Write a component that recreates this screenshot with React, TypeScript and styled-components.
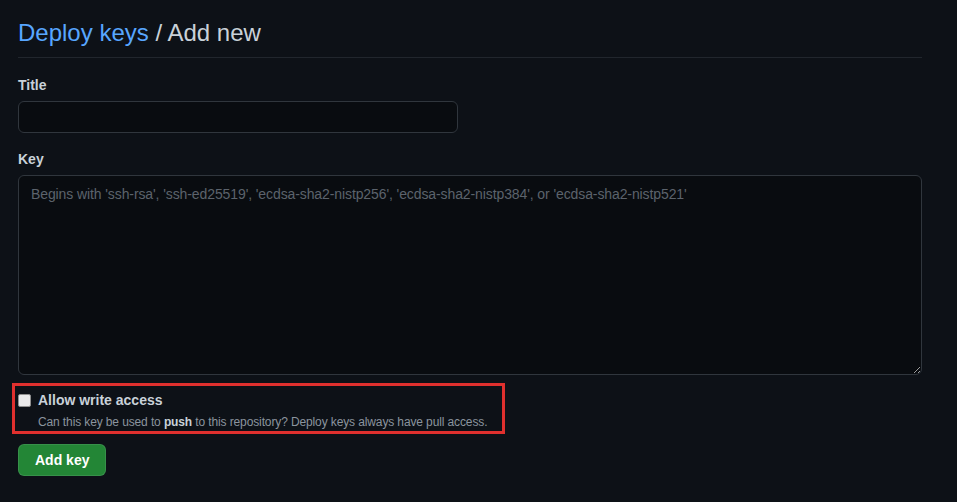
import styled, { createGlobalStyle } from 'styled-components';

const GlobalStyle = createGlobalStyle`
  html, body {
    margin: 0;
    padding: 0;
    background: #0d1117;
  }
  body {
    font-family: "Liberation Sans", Arial, sans-serif;
    color: #c9d1d9;
  }
`;

const Page = styled.div`
  padding: 15px 35px 30px 18px;
  width: 904px;
`;

const Subhead = styled.div`
  padding-bottom: 6px;
  border-bottom: 1px solid #21262d;
`;

const Heading = styled.h2`
  margin: 0;
  font-size: 24px;
  font-weight: 400;
  line-height: 36px;
  color: #c9d1d9;
`;

const Crumb = styled.a`
  color: #58a6ff;
  text-decoration: none;
`;

const FormGroup = styled.div<{ $top: number }>`
  margin-top: ${(p) => p.$top}px;
  display: flex;
  flex-direction: column;
`;

const Label = styled.label`
  font-size: 14px;
  font-weight: 700;
  line-height: 20px;
  margin-bottom: 6px;
  color: #c9d1d9;
`;

const TextInput = styled.input`
  box-sizing: border-box;
  width: 440px;
  height: 32px;
  padding: 5px 12px;
  background: #090c10;
  border: 1px solid #30363d;
  border-radius: 6px;
  color: #c9d1d9;
  font: inherit;
  font-size: 14px;
  outline: none;
`;

const KeyArea = styled.textarea`
  box-sizing: border-box;
  width: 904px;
  height: 200px;
  padding: 8px 12px;
  background: #090c10;
  border: 1px solid #30363d;
  border-radius: 6px;
  color: #c9d1d9;
  font-family: "Liberation Sans", Arial, sans-serif;
  font-size: 14px;
  line-height: 20px;
  letter-spacing: -0.1px;
  outline: none;
  resize: vertical;
  &::placeholder {
    color: #5c636c;
  }
`;

const Highlight = styled.div`
  margin: 8px 0 0 -6px;
  width: 484px;
  border: 3px solid #e0302e;
  padding: 7px 0 0 3px;
`;

const CheckRow = styled.label`
  display: flex;
  align-items: flex-start;
  gap: 7px;
`;

const Check = styled.input`
  appearance: none;
  margin: 1px 0 0 0;
  width: 13px;
  height: 13px;
  flex-shrink: 0;
  background: #e9e9ea;
  border: 1px solid #8f8f8f;
  border-radius: 2px;
`;

const CheckText = styled.div`
  display: flex;
  flex-direction: column;
`;

const CheckTitle = styled.span`
  font-size: 14px;
  font-weight: 700;
  line-height: 14px;
  color: #c9d1d9;
`;

const Note = styled.p`
  margin: 6px 0 0;
  font-size: 12px;
  line-height: 18px;
  letter-spacing: -0.12px;
  color: #8b949e;
  b {
    color: #c9d1d9;
  }
`;

const SubmitButton = styled.button`
  margin-top: 10px;
  height: 32px;
  padding: 0 16px;
  background: #238636;
  border: 1px solid rgba(240, 246, 252, 0.1);
  border-radius: 6px;
  color: #ffffff;
  font-family: "Liberation Sans", Arial, sans-serif;
  font-size: 14px;
  font-weight: 700;
  cursor: pointer;
`;

export default function App() {
  return (
    <>
      <GlobalStyle />
      <Page>
        <Subhead>
          <Heading>
            <Crumb href="#">Deploy keys</Crumb> / Add new
          </Heading>
        </Subhead>

        <FormGroup $top={17}>
          <Label htmlFor="title">Title</Label>
          <TextInput id="title" type="text" />
        </FormGroup>

        <FormGroup $top={16}>
          <Label htmlFor="key">Key</Label>
          <KeyArea
            id="key"
            placeholder="Begins with 'ssh-rsa', 'ssh-ed25519', 'ecdsa-sha2-nistp256', 'ecdsa-sha2-nistp384', or 'ecdsa-sha2-nistp521'"
          />
        </FormGroup>

        <Highlight>
          <CheckRow>
            <Check type="checkbox" />
            <CheckText>
              <CheckTitle>Allow write access</CheckTitle>
              <Note>
                Can this key be used to <b>push</b> to this repository? Deploy keys always have pull access.
              </Note>
            </CheckText>
          </CheckRow>
        </Highlight>

        <SubmitButton type="button">Add key</SubmitButton>
      </Page>
    </>
  );
}
